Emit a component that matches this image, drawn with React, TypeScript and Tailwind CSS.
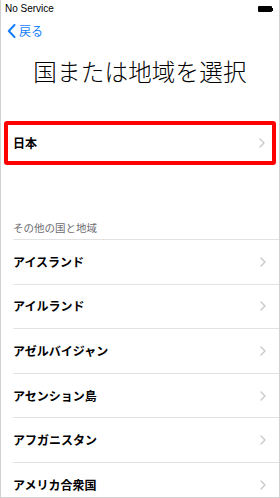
import React from "react";

const jp = { fontFamily: '"Noto Sans CJK JP", "Noto Sans", sans-serif' };

function Chevron({ className = "" }: { className?: string }) {
  return (
    <svg width="6" height="10" viewBox="0 0 6 10" className={className}>
      <path d="M1 1 L5 5 L1 9" fill="none" stroke="#c7c7cc" strokeWidth="1.3" strokeLinecap="round" strokeLinejoin="round" />
    </svg>
  );
}

const countries = ["アイスランド", "アイルランド", "アゼルバイジャン", "アセンション島", "アフガニスタン", "アメリカ合衆国"];

export default function App() {
  return (
    <div className="w-[280px] h-[498px] bg-white border-l border-r border-b border-[#d2d2d2] overflow-hidden flex flex-col" style={jp}>
      {/* status bar */}
      <div className="h-[17px] shrink-0 flex items-center justify-between pl-[4px] pr-[6px] pt-[1px]">
        <span className="text-[10px] leading-none text-black" style={{ fontFamily: '"Liberation Sans", Arial, sans-serif' }}>No Service</span>
        <div className="flex items-center">
          <div className="w-[14px] h-[6px] bg-black rounded-[1px]" />
          <div className="w-[1.5px] h-[3px] bg-black" />
        </div>
      </div>
      {/* nav */}
      <div className="h-[28px] shrink-0 flex items-center pl-[6px] gap-[3px] text-[#157efb]">
        <svg width="9" height="14" viewBox="0 0 9 14">
          <path d="M7.5 1 L1.8 7 L7.5 13" fill="none" stroke="#157efb" strokeWidth="2" strokeLinecap="round" strokeLinejoin="round" />
        </svg>
        <span className="text-[12px] leading-none">戻る</span>
      </div>
      {/* title */}
      <div className="h-[54px] shrink-0 flex items-center justify-center">
        <h1 className="text-[23.5px] leading-none font-light text-black tracking-[0.2px]">国または地域を選択</h1>
      </div>
      {/* japan */}
      <div className="h-[22px] shrink-0" />
      <div className="mx-[3px] h-[44px] shrink-0 border-[4px] border-[#ff0000] rounded-[3px] flex items-center justify-between pl-[5px] pr-[7px]">
        <span className="text-[12px] font-bold text-black leading-none">日本</span>
        <Chevron />
      </div>
      {/* section header */}
      <div className="h-[52px] shrink-0" />
      <div className="ml-[12px] h-[23px] shrink-0 flex items-end pb-[6px] border-b border-[#e2e2e2]">
        <span className="text-[10.5px] leading-none text-[#6d6d72]">その他の国と地域</span>
      </div>
      {countries.map((c) => (
        <div key={c} className="ml-[12px] h-[44.6px] shrink-0 border-b border-[#e2e2e2] flex items-center justify-between pr-[13px]">
          <span className="text-[12px] font-bold text-black leading-none">{c}</span>
          <Chevron />
        </div>
      ))}
    </div>
  );
}
